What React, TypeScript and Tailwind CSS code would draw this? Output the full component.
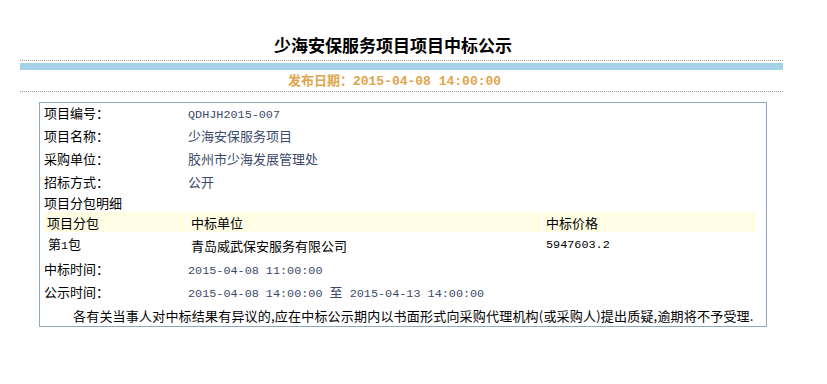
import React from 'react'

const mono = "font-['Liberation_Mono',monospace] text-[11.8px]"

const rows = [
  { label: '项目编号：', value: 'QDHJH2015-007', mono: true, h: 'h-[21px]' },
  { label: '项目名称：', value: '少海安保服务项目', h: 'h-[23px]' },
  { label: '采购单位：', value: '胶州市少海发展管理处', h: 'h-[23px]' },
  { label: '招标方式：', value: '公开', h: 'h-[23px]' },
]

export default function App() {
  return (
    <div className="w-[827px] h-[384px] bg-white text-[13px] text-black font-['Noto_Sans_CJK_SC',sans-serif] overflow-hidden">
      {/* header */}
      <div className="w-[763px] ml-[20px]">
        <div className="pt-[35px] h-[60px] pr-[17px] text-center">
          <h1 className="text-[17px] leading-[20px] font-bold">少海安保服务项目项目中标公示</h1>
        </div>
        <div className="border-t border-dotted border-[#9a9a9a]" />
        <div className="mt-[2px] h-[7px] bg-[#a6d2e8]" />
        <div className="h-[21px] flex items-center justify-center pr-[14px] text-[#dfa54c] font-bold leading-none">
          <div className="flex items-baseline">
            <span>发布日期：</span>
            <span className="font-['Liberation_Mono',monospace] text-[13px]">2015-04-08 14:00:00</span>
          </div>
        </div>
        <div className="border-t border-dotted border-[#9a9a9a]" />
      </div>

      {/* content box */}
      <div className="ml-[39px] mt-[10px] w-[728px] h-[225px] border border-[#8fa8bd] pl-[4px] pr-[10px]">
        {rows.map((r) => (
          <div key={r.label} className={`${r.h} flex items-center leading-none`}>
            <div className="flex items-baseline">
              <div className="w-[144px]">{r.label}</div>
              <div className={r.mono ? `text-[#3b4a6b] ${mono}` : 'text-[#3b4a6b]'}>{r.value}</div>
            </div>
          </div>
        ))}
        <div className="h-[19px] flex items-center leading-none">项目分包明细</div>

        {/* package table */}
        <div className="grid grid-cols-[142px_353px_213px] gap-x-[2px] leading-none">
          <div className="h-[20px] bg-[#fffde3] flex items-center pl-[3px]">项目分包</div>
          <div className="h-[20px] bg-[#fffde3] flex items-center pl-[3px]">中标单位</div>
          <div className="h-[20px] bg-[#fffde3] flex items-center pl-[3px]">中标价格</div>
          <div className="h-[22px] flex items-center pl-[4px] mt-[2px]">
            <div className="flex items-baseline">
              <span>第</span>
              <span className={mono}>1</span>
              <span>包</span>
            </div>
          </div>
          <div className="h-[22px] flex items-center pl-[3px] mt-[2px]">青岛威武保安服务有限公司</div>
          <div className="h-[22px] flex items-center pl-[3px] mt-[2px] pt-[2px]">
            <span className={mono}>5947603.2</span>
          </div>
        </div>

        <div className="h-[23px] mt-[2px] flex items-center leading-none">
          <div className="flex items-baseline">
            <div className="w-[144px]">中标时间：</div>
            <div className={`text-[#3b4a6b] ${mono}`}>2015-04-08 11:00:00</div>
          </div>
        </div>
        <div className="h-[23px] flex items-center leading-none">
          <div className="flex items-baseline text-[#3b4a6b]">
            <div className="w-[144px] text-black">公示时间：</div>
            <span className={mono}>2015-04-08 14:00:00&nbsp;</span>
            <span>至</span>
            <span className={mono}>&nbsp;2015-04-13 14:00:00</span>
          </div>
        </div>
        <div className="h-[23px] flex items-center leading-none pl-[29px] whitespace-nowrap tracking-[0.2px]">
          各有关当事人对中标结果有异议的,应在中标公示期内以书面形式向采购代理机构(或采购人)提出质疑,逾期将不予受理.
        </div>
      </div>
    </div>
  )
}
